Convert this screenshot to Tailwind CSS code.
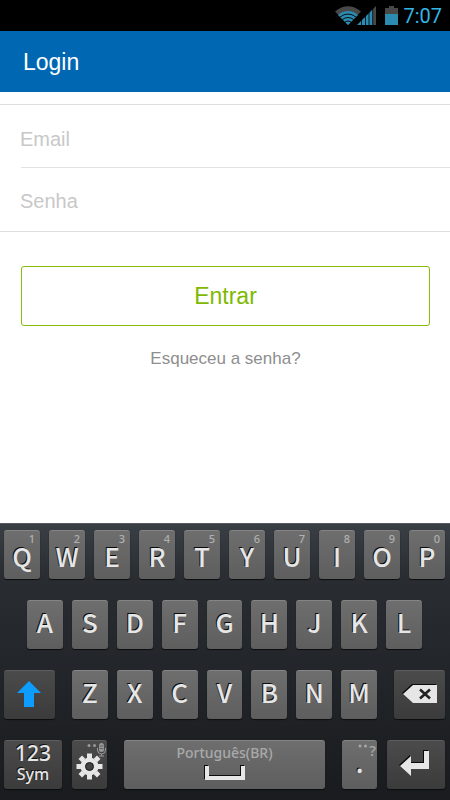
<!DOCTYPE html>
<html lang="pt-BR">
<head>
<meta charset="utf-8">
<meta name="viewport" content="width=device-width, initial-scale=1">
<title>Login</title>
<script src="https://cdn.jsdelivr.net/npm/@tailwindcss/browser@4"></script>
</head>
<body class="flex min-h-screen flex-col bg-white font-['Liberation_Sans',Arial,sans-serif]">

<div class="flex h-[31px] items-center justify-end bg-black pr-2">
  <svg class="h-[20px] w-[26px]" viewBox="0 0 26 20" aria-hidden="true">
    <path d="M0 5.500Q13-5 26 5.500L13 19Z" fill="#484848"/>
    <path d="M3 9Q13 1 23 9L13 19Z" fill="#2b8bb0"/>
    <path d="M5 11Q13 5 21 11M7.300 13.500Q13 9.500 18.700 13.500M9.800 16Q13 13.800 16.200 16" fill="none" stroke="#000" stroke-width=".9"/>
  </svg>
  <svg class="-ml-1 h-[20px] w-[20px]" viewBox="0 0 20 20" aria-hidden="true">
    <path d="M0 19L16 3V19Z" fill="#2b8bb0"/>
    <path d="M16 3L19 0V19H16Z" fill="#484848"/>
    <path d="M4.500 4V19M8.500 4V19M12 4V19M15.700 0V19" stroke="#000" stroke-width=".8"/>
  </svg>
  <svg class="ml-2 h-[20px] w-[13px]" viewBox="0 0 13 20" aria-hidden="true">
    <path d="M4 0H9V2H13V8H0V2H4Z" fill="#484848"/>
    <path d="M0 8H13V19H0Z" fill="#2b8bb0"/>
  </svg>
  <time class="ml-[5px] font-[Roboto,sans-serif] text-[20px] leading-5 text-[#33b5e5]">7:07</time>
</div>

<header class="flex h-[61px] items-center bg-[#0068b3] px-[23px]">
  <h1 class="text-[23px] leading-7 text-white">Login</h1>
</header>

<form class="mt-3">
  <div class="border-y border-[#dedede]">
    <div class="ml-[20px] pt-[6px]">
      <input id="email" type="email" aria-label="Email" placeholder="Email" class="block h-14 w-full text-[20px] text-[#555] outline-none placeholder:text-[#c8c8c8]">
    </div>
    <hr class="ml-[21px] border-[#e2e2e2]">
    <div class="ml-[20px] pt-[5px] pb-[2px]">
      <input id="senha" type="password" aria-label="Senha" placeholder="Senha" class="block h-14 w-full text-[20px] text-[#555] outline-none placeholder:text-[#c8c8c8]">
    </div>
  </div>
  <div class="pt-[34px] pr-[20px] pl-[21px] text-center">
    <button type="submit" class="h-[60px] w-full rounded-[3px] border border-[#86bd0a] text-[23px] text-[#7eb900]">Entrar</button>
    <a href="#" class="mt-[21px] inline-block text-[17px] leading-6 text-[#8e8e8e]">Esqueceu a senha?</a>
  </div>
</form>

<section id="keyboard" aria-label="Teclado" class="mt-auto flex flex-col gap-[21px] border-t border-[#555b60] bg-linear-to-b from-[#3a3f45] via-[#292d32] via-20% to-[#191b1e] pt-[6px] pr-[5px] pb-[11px] pl-1 font-['Noto_Sans',sans-serif] font-medium text-[#e6e6e6]">
  <div class="flex gap-[9px]" data-keys="QWERTYUIOP" data-hints="1234567890"></div>
  <div class="flex gap-[9px] pr-[23px] pl-[23px]" data-keys="ASDFGHJKL"></div>
  <div class="flex gap-[17px]">
    <button type="button" aria-label="Shift" class="flex h-[49px] grow-[51] basis-0 items-center justify-center rounded-[3px] border-t border-[#5d5d5d] bg-linear-to-b from-[#4b4b4b] to-[#3b3b3b] pb-[3px] shadow-[0_1px_1px_0_#0c0d0e]">
      <svg class="h-[28px] w-[26px]" viewBox="0 0 26 28" aria-hidden="true"><path d="M13 1L25 13H18V27H8V13H1Z" fill="#0c9dff"/></svg>
    </button>
    <div class="flex grow-[306] basis-0 gap-[9px]" data-keys="ZXCVBNM"></div>
    <button type="button" aria-label="Apagar" class="flex h-[49px] grow-[51] basis-0 items-center justify-center rounded-[3px] border-t border-[#5d5d5d] bg-linear-to-b from-[#4b4b4b] to-[#3b3b3b] pb-[3px] shadow-[0_1px_1px_0_#0c0d0e]">
      <svg class="h-[22px] w-[36px]" viewBox="0 0 36 22" aria-hidden="true"><path d="M0 10L10 1H34V19H10Z" fill="#080808"/><path d="M1 11L11 2H35V20H11Z" fill="#e6e6e6"/><path d="M18 6.500L28 15.500M28 6.500L18 15.500" stroke="#222" stroke-width="2.600"/></svg>
    </button>
  </div>
  <div class="flex">
    <button type="button" class="flex h-[49px] min-w-0 grow-[58] basis-0 flex-col items-center rounded-[3px] border-t border-[#5d5d5d] bg-linear-to-b from-[#4b4b4b] to-[#3b3b3b] shadow-[0_1px_1px_0_#0c0d0e] text-shadow-[-1px_-1px_0_#111]">
      <span class="text-[21px] leading-[25px]">123</span>
      <span class="text-[16px] leading-[17px]">Sym</span>
    </button>
    <button type="button" aria-label="Configurações" class="relative ml-[10px] flex h-[49px] min-w-0 grow-[35] basis-0 items-end justify-center rounded-[3px] border-t border-[#5d5d5d] bg-linear-to-b from-[#4b4b4b] to-[#3b3b3b] pb-[9px] shadow-[0_1px_1px_0_#0c0d0e]">
      <svg class="h-[27px] w-[27px]" viewBox="-13.500 -13.500 27 27" aria-hidden="true">
        <g fill="none" stroke="#e6e6e6"><circle r="6.500" stroke-width="5"/><path d="M0-13V-8M0 8V13M-13 0H-8M8 0H13M-9.200-9.200L-6-6M6 6L9.200 9.200M-9.200 9.200L-6 6M6-6L9.200-9.200" stroke-width="5"/></g>
        <circle r="4" fill="none" stroke="#151515"/>
      </svg>
      <svg class="absolute top-[2px] right-[1px] h-[14px] w-[19px]" viewBox="0 0 19 14" aria-hidden="true">
        <g fill="#999"><circle cx="2" cy="2.500" r="1.500"/><circle cx="7.500" cy="2.500" r="1.500"/><rect x="12" y="0" width="5" height="9" rx="2.500"/></g>
        <path d="M10.500 5V7Q10.500 11 14.500 11Q18.500 11 18.500 7V5M14.500 11V13M12 13H17" fill="none" stroke="#999"/>
        <path d="M12.500 3H16.500M12.500 5.500H16.500" stroke="#555" stroke-width=".8"/>
      </svg>
    </button>
    <button type="button" class="ml-[17px] flex h-[49px] min-w-0 grow-[201] basis-0 flex-col items-center rounded-[3px] border-t border-[#858585] bg-linear-to-b from-[#6e6e6e] to-[#5e5e5e] pt-[2px] shadow-[0_1px_1px_0_#0c0d0e]">
      <span class="text-[14px] leading-5 text-[#a9a9a9]">Português(BR)</span>
      <svg class="mt-[2px] h-[16px] w-[41px]" viewBox="0 0 41 16" aria-hidden="true"><path d="M2 0V12H38V0" fill="none" stroke="#0c0c0c" stroke-width="4"/><path d="M3 1V13H39V1" fill="none" stroke="#e6e6e6" stroke-width="4"/></svg>
    </button>
    <button type="button" class="relative ml-[17px] flex h-[49px] min-w-0 grow-[35] basis-0 items-end justify-center rounded-[3px] border-t border-[#858585] bg-linear-to-b from-[#6e6e6e] to-[#5e5e5e] pb-[14px] shadow-[0_1px_1px_0_#0c0d0e] text-shadow-[-1px_-1px_0_#0c0c0c]">
      <span class="text-[30px] leading-[26px]">.</span>
      <span class="absolute top-[1px] right-px flex text-[15px] leading-4 text-[#a9a9a9] text-shadow-none">
        <svg class="mt-[1px] h-[6px] w-[11px]" viewBox="0 0 11 6" aria-hidden="true"><g fill="#a9a9a9"><circle cx="2" cy="3" r="1.500"/><circle cx="7.500" cy="3" r="1.500"/></g></svg>?</span>
    </button>
    <button type="button" aria-label="Enter" class="ml-[10px] flex h-[49px] min-w-0 grow-[58] basis-0 items-center justify-center rounded-[3px] border-t border-[#5d5d5d] bg-linear-to-b from-[#4b4b4b] to-[#3b3b3b] pb-[3px] shadow-[0_1px_1px_0_#0c0d0e]">
      <svg class="mr-1 h-[27px] w-[31px]" viewBox="0 0 31 27" aria-hidden="true"><path d="M0 15L11 5V12H24V0H29V18H11V25Z" fill="#080808"/><path d="M1 16L12 6V13H25V1H30V19H12V26Z" fill="#e6e6e6"/></svg>
    </button>
  </div>
</section>

<template id="key">
  <button type="button" class="flex h-[49px] min-w-0 flex-1 flex-col items-center justify-end rounded-[3px] border-t border-[#858585] bg-linear-to-b from-[#6e6e6e] to-[#5e5e5e] pb-[17px] shadow-[0_1px_1px_0_#0c0d0e]"><span class="font-['Noto_Sans_CJK_JP',sans-serif] text-[26px] leading-5 text-shadow-[-1px_-1px_0_#0c0c0c]"></span></button>
</template>
<template id="hinted-key">
  <button type="button" class="flex h-[49px] min-w-0 flex-1 flex-col items-center justify-end rounded-[3px] border-t border-[#858585] bg-linear-to-b from-[#6e6e6e] to-[#5e5e5e] pb-[13px] shadow-[0_1px_1px_0_#0c0d0e]"><small class="self-end pr-[5px] text-[11px] leading-[15px] text-[#b0b0b0]"></small><span class="font-['Noto_Sans_CJK_JP',sans-serif] text-[26px] leading-5 text-shadow-[-1px_-1px_0_#0c0c0c]"></span></button>
</template>
<script>
  document.querySelectorAll('[data-keys]').forEach(function (row) {
    var hints = row.dataset.hints;
    var template = document.getElementById(hints ? 'hinted-key' : 'key');
    Array.from(row.dataset.keys).forEach(function (letter, i) {
      var key = template.content.firstElementChild.cloneNode(true);
      key.querySelector('span').textContent = letter;
      if (hints) key.querySelector('small').textContent = hints[i];
      row.appendChild(key);
    });
  });
</script>
</body>
</html>
